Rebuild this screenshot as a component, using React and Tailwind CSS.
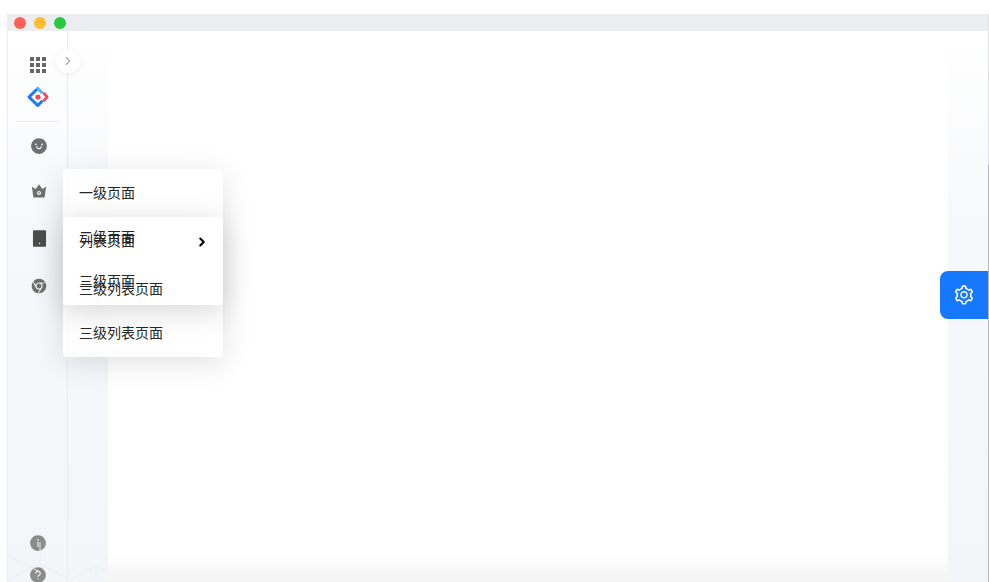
import { ChevronRight } from 'lucide-react';
import {
  AiFillSmile,
  AiFillCrown,
  AiFillTablet,
  AiFillChrome,
  AiFillInfoCircle,
  AiFillQuestionCircle,
  AiOutlineSetting,
} from 'react-icons/ai';

const cjk = "font-['Noto_Sans_CJK_SC','Noto_Sans',sans-serif]";

function Logo() {
  return (
    <svg width="24" height="24" viewBox="0 0 24 24" fill="none" strokeWidth="3" strokeLinejoin="round" strokeLinecap="round">
      <path d="M15.5 16.7 11.7 20.5 3 12l8.7-8.5" stroke="#1677ff" />
      <path d="M11.7 3.5 15.5 7.3" stroke="#45b8ff" />
      <path d="M18 8.5 21.2 12 18 15.5" stroke="#f5455c" strokeWidth="2.6" />
      <circle cx="12" cy="12" r="2.6" fill="#f5455c" />
    </svg>
  );
}

function HexLines() {
  return (
    <svg className="absolute bottom-0 left-0" width="100" height="40" viewBox="0 0 100 40" fill="none" stroke="#e6eff9" strokeWidth="1">
      <path d="M0 14 32 30M0 38l32-16 28 15M32 22V0M62 38l26-14v16M88 24l12 6" />
    </svg>
  );
}

function Label({ className, children }) {
  return (
    <span className={`absolute left-[79px] text-sm leading-[22px] text-[#262626] ${className}`}>
      {children}
    </span>
  );
}

export default function App() {
  return (
    <div className={`relative h-[582px] w-[989px] overflow-hidden bg-white pt-[14px] pl-[7px] ${cjk}`}>
      <div className="flex h-[568px] w-[982px] flex-col border-r border-l border-r-[#dfe1e6] border-l-[#eceef2]">
        {/* Barra de ventana */}
        <div className="flex h-[17px] shrink-0 items-center gap-2 bg-[#ebedf1] pl-[6px]">
          <span className="h-3 w-3 rounded-full bg-[#ff5f57]" />
          <span className="h-3 w-3 rounded-full bg-[#febc2e]" />
          <span className="h-3 w-3 rounded-full bg-[#28c840]" />
        </div>

        <div className="relative flex min-h-0 flex-1">
          {/* Sidebar */}
          <aside className="flex w-[60px] shrink-0 flex-col items-center border-r border-[#e9ebef] bg-gradient-to-b from-white via-[#f7f8fb] via-35% to-[#f3f5f8] text-[#707070]">
            <div className="mt-[26px] ml-[1px] grid grid-cols-3 gap-[2px]">
              {Array.from({ length: 9 }).map((_, i) => (
                <span key={i} className="h-[4px] w-[4px] bg-[#666666]" />
              ))}
            </div>
            <div className="mt-[12px] ml-[1px] flex h-6 w-6 items-center justify-center">
              <Logo />
            </div>
            <div className="mt-[12px] h-px w-[43px] bg-[#e8e9ec]" />
            <div className="mt-[1px] ml-[3px] flex flex-col items-center">
              <div className="flex h-[46px] items-center justify-center"><AiFillSmile size={18} /></div>
              <div className="flex h-[44px] items-center justify-center"><AiFillCrown size={18} /></div>
              <div className="flex h-[50px] items-center justify-center"><AiFillTablet size={19} className="text-[#4d4d4d]" /></div>
              <div className="flex h-[46px] items-center justify-center"><AiFillChrome size={18} /></div>
            </div>
            <div className="mt-auto ml-[1px] flex flex-col items-center gap-[14px] text-[#8c8c8c]">
              <AiFillInfoCircle size={18} />
              <AiFillQuestionCircle size={18} className="-mb-[2px]" />
            </div>
          </aside>

          {/* Columna lateral del contenido */}
          <div className="w-10 shrink-0 bg-gradient-to-b from-white via-[#f7f8fb] via-35% to-[#f3f5f8]" />

          {/* Contenido */}
          <main className="flex-1 bg-gradient-to-b from-white from-[95%] to-[#f3f3f4]" />

          {/* Panel derecho */}
          <div className="w-10 shrink-0 bg-gradient-to-b from-white via-[#f7f8fb] via-35% to-[#f3f5f8]" />

          <HexLines />

          {/* Scrollbar */}
          <div className="absolute top-[134px] right-[-1px] bottom-0 w-px bg-[#b6b8bc]" />

          {/* Boton de ajustes */}
          <div className="absolute top-[240px] right-0 flex h-12 w-12 items-center justify-center rounded-l-lg bg-[#1677ff] text-white">
            <AiOutlineSetting size={22} />
          </div>

          {/* Boton colapsar */}
          <div className="absolute top-[18px] left-[48px] flex h-6 w-6 items-center justify-center rounded-full bg-white shadow-[0_2px_8px_rgba(0,0,0,0.06)]">
            <ChevronRight size={14} strokeWidth={2} className="text-[#a8a8a8]" />
          </div>
        </div>
      </div>

      {/* Menus flotantes */}
      <div className="absolute top-[169px] left-[63px] h-[188px] w-40 rounded bg-white/85 shadow-[0_6px_30px_rgba(0,0,0,0.12)]" />
      <div className="absolute top-[217px] left-[63px] h-[88px] w-40 rounded bg-white/90 shadow-[0_6px_30px_rgba(0,0,0,0.16)]" />
      <Label className="top-[181px]">一级页面</Label>
      <Label className="top-[225px]">二级页面</Label>
      <Label className="top-[229px]">列表页面</Label>
      <Label className="top-[269px]">三级页面</Label>
      <Label className="top-[277px]">三级列表页面</Label>
      <Label className="top-[321px]">三级列表页面</Label>
      <ChevronRight size={14} strokeWidth={3.5} className="absolute top-[235px] left-[195px] text-black" />
    </div>
  );
}
